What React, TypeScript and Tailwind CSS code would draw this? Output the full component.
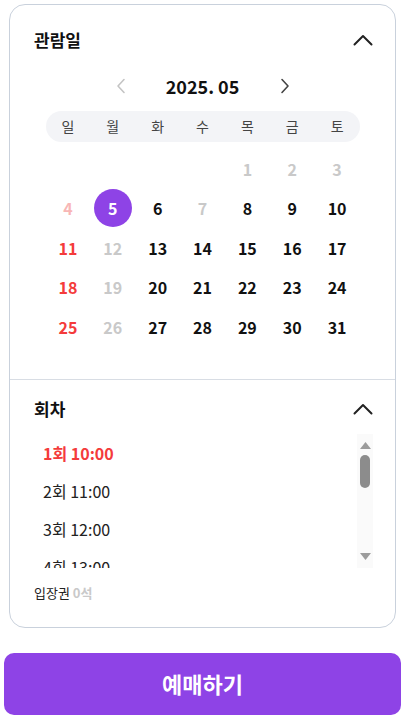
import React from "react";

const font = { fontFamily: '"Noto Sans CJK KR", "Noto Sans", sans-serif' };

const weekdays = ["일", "월", "화", "수", "목", "금", "토"];

type Day = { n: number; tone: "off" | "sun-off" | "sun" | "normal" | "selected" };

const days: (Day | null)[] = [
  null, null, null, null,
  { n: 1, tone: "off" }, { n: 2, tone: "off" }, { n: 3, tone: "off" },
  { n: 4, tone: "sun-off" }, { n: 5, tone: "selected" }, { n: 6, tone: "normal" }, { n: 7, tone: "off" },
  { n: 8, tone: "normal" }, { n: 9, tone: "normal" }, { n: 10, tone: "normal" },
];
for (let d = 11; d <= 31; d++) {
  const col = (d + 3) % 7;
  const tone = col === 0 ? "sun" : col === 1 ? "off" : "normal";
  days.push({ n: d, tone });
}

const sessions = ["1회 10:00", "2회 11:00", "3회 12:00", "4회 13:00"];

function ChevronUp() {
  return (
    <svg width="20" height="12" viewBox="0 0 20 12" fill="none">
      <polyline points="1.5,10.5 10,2 18.5,10.5" stroke="#222" strokeWidth="2" strokeLinecap="round" strokeLinejoin="round" />
    </svg>
  );
}

function Arrow({ dir, color }: { dir: "left" | "right"; color: string }) {
  return (
    <svg width="10" height="16" viewBox="0 0 10 16" fill="none">
      <polyline
        points={dir === "left" ? "8,1.5 2,8 8,14.5" : "2,1.5 8,8 2,14.5"}
        stroke={color}
        strokeWidth="1.6"
        strokeLinecap="round"
        strokeLinejoin="round"
      />
    </svg>
  );
}

function Triangle({ up }: { up?: boolean }) {
  return (
    <svg width="11" height="7" viewBox="0 0 11 7">
      <polygon points={up ? "0,7 5.5,0 11,7" : "0,0 11,0 5.5,7"} fill="#9c9c9c" />
    </svg>
  );
}

function DayCell({ day }: { day: Day | null }) {
  if (!day) return <div className="h-[39.5px]" />;
  const toneClass = {
    off: "text-[#c9c9c9]",
    "sun-off": "text-[#f8b6b6]",
    sun: "text-[#f43b3b]",
    normal: "text-[#111]",
    selected: "text-white",
  }[day.tone];
  return (
    <div className="h-[39.5px] flex items-center justify-center">
      {day.tone === "selected" ? (
        <div className="w-[38px] h-[38px] rounded-full bg-[#8e43e6] flex items-center justify-center text-white text-[16px] font-bold">
          {day.n}
        </div>
      ) : (
        <span className={`text-[16px] font-bold ${toneClass}`}>{day.n}</span>
      )}
    </div>
  );
}

export default function App() {
  return (
    <div className="bg-white min-h-[720px] pt-1 text-[#111]" style={font}>
      <div className="ml-[9px] w-[387px] rounded-2xl border border-[#c9d1dc] bg-white">
        {/* 관람일 */}
        <section className="pt-[23px] pb-[32px] pl-6 pr-[22px]">
          <div className="h-6 flex items-center justify-between">
            <h2 className="text-[17px] font-bold leading-6">관람일</h2>
            <ChevronUp />
          </div>

          <div className="mt-[22px] h-6 flex items-center justify-center -ml-[2px]">
            <button className="w-5 flex justify-center">
              <Arrow dir="left" color="#c4c4c4" />
            </button>
            <div className="w-[144px] text-center text-[18px] font-bold leading-6">2025. 05</div>
            <button className="w-5 flex justify-center">
              <Arrow dir="right" color="#444" />
            </button>
          </div>

          <div className="mt-[13px] w-[314px] mx-auto h-[31px] rounded-full bg-[#f3f4f7] grid grid-cols-7 items-center -translate-x-[1px]">
            {weekdays.map((w) => (
              <span key={w} className="text-center text-[14px] text-[#444]">
                {w}
              </span>
            ))}
          </div>

          <div className="mt-[7px] w-[314px] mx-auto grid grid-cols-7 -translate-x-[1px]">
            {days.map((d, i) => (
              <DayCell key={i} day={d} />
            ))}
          </div>
        </section>

        <div className="border-t border-[#d8dde4]" />

        {/* 회차 */}
        <section className="pt-[17px] pb-6 pl-6 pr-[22px]">
          <div className="h-6 flex items-center justify-between">
            <h2 className="text-[17px] font-bold leading-6">회차</h2>
            <ChevronUp />
          </div>

          <div className="mt-[13px] h-[134px] flex">
            <ul className="flex-1 overflow-hidden">
              {sessions.map((s, i) => (
                <li
                  key={s}
                  className={`h-[38px] flex items-center pl-[9px] text-[16px] ${
                    i === 0 ? "font-bold text-[#f43b3b]" : "text-[#222]"
                  }`}
                >
                  {s}
                </li>
              ))}
            </ul>
            <div className="w-[16px] bg-[#fafafa] flex flex-col items-center pt-[8px] pb-[8px]">
              <Triangle up />
              <div className="mt-[6px] w-[10px] h-[33px] rounded-full bg-[#8c8c8c]" />
              <div className="flex-1" />
              <Triangle />
            </div>
          </div>

          <p className="mt-[15px] text-[13px] leading-5 text-[#222]">
            입장권 <span className="font-bold text-[#c9c9c9]">0석</span>
          </p>
        </section>
      </div>

      <button className="mt-[25px] ml-1 w-[397px] h-[62px] rounded-[10px] bg-[#8e43e6] text-white text-[22px] font-bold">
        예매하기
      </button>
    </div>
  );
}
